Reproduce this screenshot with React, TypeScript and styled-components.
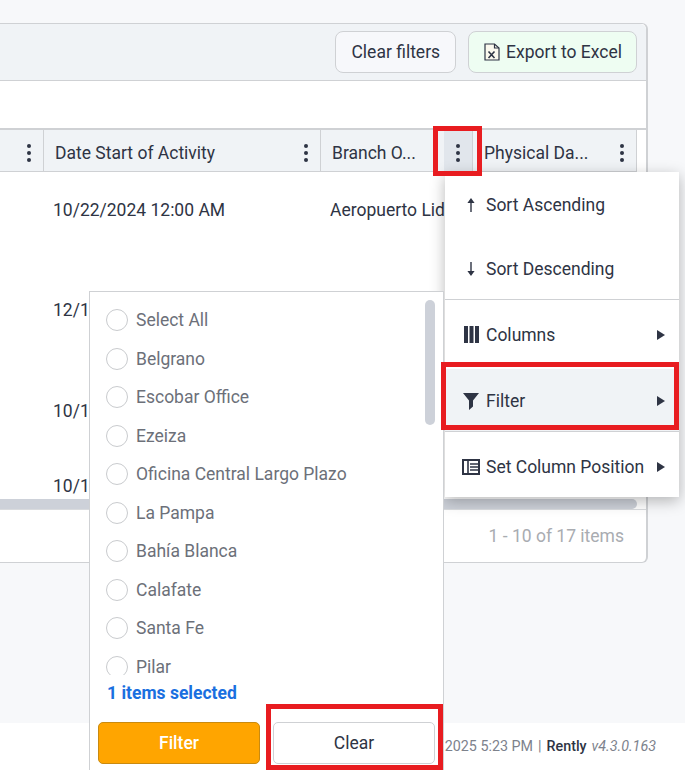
import React from "react";
import styled, { createGlobalStyle } from "styled-components";

const Global = createGlobalStyle`
  html, body { margin: 0; padding: 0; background: #f7f8fa; }
  * { box-sizing: border-box; }
  body { font-family: Roboto, "Liberation Sans", sans-serif; color: #2e3444; }
`;

const Page = styled.div`
  position: relative;
  width: 685px;
  height: 770px;
  overflow: hidden;
  display: flex;
  flex-direction: column;
`;
const Main = styled.main`
  flex: 1;
  padding: 23px 37px 0 0;
`;
const Card = styled.section`
  height: 540px;
  display: flex;
  flex-direction: column;
  background: #fff;
  border: 1px solid #cfd1d4;
  border-left: none;
  border-right-width: 2px;
  border-radius: 0 6px 6px 0;
`;
const Toolbar = styled.div`
  height: 57px;
  flex: none;
  display: flex;
  justify-content: flex-end;
  align-items: center;
  gap: 12px;
  padding-right: 9px;
  background: #f0f3f6;
  border-bottom: 1px solid #cfd1d4;
  border-radius: 0 6px 0 0;
`;
const ToolButton = styled.button<{ $green?: boolean }>`
  height: 42px;
  display: flex;
  align-items: center;
  gap: ${(p) => (p.$green ? "6px" : "0")};
  padding: 0 ${(p) => (p.$green ? "14px" : "15px")} 0 15px;
  font: 400 17.5px Roboto, sans-serif;
  color: #2e3444;
  background: ${(p) => (p.$green ? "#eefdf2" : "#f7f8fb")};
  border: 1px solid #cfd1d4;
  border-radius: 8px;
`;
const SearchStrip = styled.div`
  height: 49px;
  flex: none;
  border-bottom: 2px solid #cfd1d4;
`;
const cols = "44px 277px 152px 164px";
const HeaderRow = styled.div`
  height: 42px;
  flex: none;
  display: grid;
  grid-template-columns: ${cols};
  width: 637px;
  background: #f0f3f6;
  border-bottom: 1px solid #cfd1d4;
`;
const HeaderCell = styled.div`
  display: flex;
  align-items: center;
  justify-content: space-between;
  padding-left: 11px;
  font-size: 17.5px;
  border-right: 1px solid #cfd1d4;
  min-width: 0;
`;
const HeaderLabel = styled.span`
  flex: 1;
  padding-top: 4px;
  white-space: nowrap;
`;
const Kebab = styled.span<{ $active?: boolean }>`
  flex: none;
  width: 28px;
  height: 100%;
  padding-top: 4px;
  display: flex;
  flex-direction: column;
  align-items: center;
  justify-content: center;
  gap: 3px;
  background: ${(p) => (p.$active ? "#e1e6ec" : "transparent")};
  & > i {
    width: 4px;
    height: 4px;
    border-radius: 50%;
    background: #2e3444;
  }
`;
const Body = styled.div`
  height: 327px;
  flex: none;
  width: 637px;
  overflow: hidden;
`;
const Row = styled.div<{ $h: number }>`
  display: grid;
  grid-template-columns: ${cols};
  height: ${(p) => p.$h}px;
  padding-top: 28px;
  font-size: 17.5px;
  line-height: 20px;
`;
const Cell = styled.div`
  padding-left: 9px;
  white-space: nowrap;
  overflow: hidden;
`;
const ScrollTrack = styled.div`
  height: 11px;
  flex: none;
  border-bottom: 1px solid #d9dbde;
`;
const ScrollThumb = styled.div`
  width: 637px;
  height: 10px;
  background: #cdd1d9;
  border-radius: 0 5px 5px 0;
`;
const Pager = styled.div`
  flex: 1;
  display: flex;
  align-items: center;
  justify-content: flex-end;
  padding-right: 22px;
  font-size: 17.5px;
  color: #a9acb1;
`;
const Footer = styled.footer`
  height: 47px;
  flex: none;
  display: flex;
  align-items: center;
  justify-content: flex-end;
  gap: 5px;
  padding: 0 29px 2px 0;
  background: #fff;
  font-size: 14.3px;
  color: #7d828c;
`;
const Brand = styled.strong`
  font-weight: 500;
  color: #2e3444;
`;
const Version = styled.em`
  color: #7d828c;
`;

const Menu = styled.div`
  position: absolute;
  left: 445px;
  top: 172px;
  width: 234px;
  height: 325px;
  background: #fff;
  box-shadow: 0 4px 14px rgba(0, 0, 0, 0.28);
  display: flex;
  flex-direction: column;
`;
const MenuItem = styled.div<{ $h: number; $active?: boolean; $line?: boolean; $pt?: number }>`
  height: ${(p) => p.$h}px;
  flex: none;
  display: flex;
  align-items: center;
  padding: ${(p) => p.$pt ?? 0}px 14px 0 18px;
  font-size: 17.5px;
  background: ${(p) => (p.$active ? "#f0f3f6" : "#fff")};
  border-bottom: ${(p) => (p.$line ? "1px solid #cfd1d4" : "none")};
`;
const MenuIcon = styled.span`
  width: 16px;
  margin-right: 7px;
  flex: none;
  display: flex;
  align-items: center;
  justify-content: center;
  & > svg { flex: none; }
`;
const MenuLabel = styled.span`
  flex: 1;
  white-space: nowrap;
`;
const Caret = styled.span`
  flex: none;
  width: 0;
  height: 0;
  border-left: 8px solid #2e3444;
  border-top: 5px solid transparent;
  border-bottom: 5px solid transparent;
`;

const FilterPanel = styled.div`
  position: absolute;
  left: 89px;
  top: 291px;
  width: 355px;
  height: 479px;
  background: #fff;
  border: 1px solid #cfd1d4;
  border-bottom: none;
  display: flex;
  flex-direction: column;
`;
const ListArea = styled.div`
  position: relative;
  height: 383px;
  flex: none;
  overflow: hidden;
  padding: 9px 0 0 16px;
`;
const ListThumb = styled.div`
  position: absolute;
  left: 335px;
  top: 8px;
  width: 10px;
  height: 125px;
  border-radius: 5px;
  background: #cdd1d9;
`;
const Option = styled.div`
  height: 38.5px;
  display: flex;
  align-items: center;
  gap: 8px;
  font-size: 17.5px;
  color: #6c7079;
  white-space: nowrap;
`;
const Radio = styled.span`
  width: 22px;
  height: 22px;
  border-radius: 50%;
  border: 1px solid #c9cbce;
  background: #fff;
  flex: none;
`;
const Selected = styled.div`
  height: 47px;
  flex: none;
  padding: 7px 0 0 17px;
  font-size: 17.5px;
  font-weight: 700;
  line-height: 22px;
  color: #1a6fe0;
`;
const ButtonRow = styled.div`
  display: grid;
  grid-template-columns: 162px 162px;
  gap: 13px;
  margin-left: 8px;
`;
const FilterButton = styled.button`
  height: 42px;
  font: 500 17.5px Roboto, sans-serif;
  color: #fff;
  background: #ffa500;
  border: 1px solid #c98a10;
  border-radius: 5px;
`;
const ClearButton = styled.button`
  height: 42px;
  font: 400 17.5px Roboto, sans-serif;
  color: #2e3444;
  background: #fff;
  border: 1px solid #cfd1d4;
  border-radius: 5px;
`;
const Annotation = styled.div<{ $x: number; $y: number; $w: number; $h: number }>`
  position: absolute;
  left: ${(p) => p.$x}px;
  top: ${(p) => p.$y}px;
  width: ${(p) => p.$w}px;
  height: ${(p) => p.$h}px;
  border: 5px solid #e81c20;
  pointer-events: none;
`;

const Dots = ({ active }: { active?: boolean }) => (
  <Kebab $active={active}><i /><i /><i /></Kebab>
);
const ExcelIcon = () => (
  <svg width="16" height="18" viewBox="0 0 16 18" fill="none" stroke="#2e3444" strokeWidth="1.2">
    <path d="M1 1h9.5L15 5V17H1z" fill="#fbf9ee" />
    <path d="M10.5 1v4H15" />
    <path d="M4.5 8.5l6 6.5M10.5 8.5l-6 6.5" strokeWidth="1.6" />
  </svg>
);
const ArrowUp = () => (
  <svg width="10" height="14" viewBox="0 0 10 14" fill="#2e3444"><path d="M5 0l3.6 5H5.7v9H4.3V5H1.4z" /></svg>
);
const ArrowDown = () => (
  <svg width="10" height="14" viewBox="0 0 10 14" fill="#2e3444"><path d="M5 14l3.6-5H5.7V0H4.3v9H1.4z" /></svg>
);
const ColumnsIcon = () => (
  <svg width="15" height="17" viewBox="0 0 15 17" fill="#2e3444"><path d="M0 0h4v17H0zM5.5 0h4v17h-4zM11 0h4v17h-4z" /></svg>
);
const FunnelIcon = () => (
  <svg width="16" height="17" viewBox="0 0 16 17" fill="#2e3444"><path d="M0 0h16L10 7.5v6L6 17V7.5z" /></svg>
);
const PositionIcon = () => (
  <svg width="18" height="16" viewBox="0 0 18 16" fill="none" stroke="#2e3444" strokeWidth="2">
    <rect x="1" y="1" width="16" height="14" />
    <path d="M6 1v14M8 5h8M8 8h8M8 11h8" strokeWidth="1.6" />
  </svg>
);

const rows = [
  { h: 100, date: "10/22/2024 12:00 AM", branch: "Aeropuerto Lid" },
  { h: 101, date: "12/1", branch: "" },
  { h: 75, date: "10/1", branch: "" },
  { h: 51, date: "10/1", branch: "" },
];
const options = [
  "Select All", "Belgrano", "Escobar Office", "Ezeiza", "Oficina Central Largo Plazo",
  "La Pampa", "Bahía Blanca", "Calafate", "Santa Fe", "Pilar",
];

export default function App() {
  return (
    <Page>
      <Global />
      <Main>
        <Card>
          <Toolbar>
            <ToolButton>Clear filters</ToolButton>
            <ToolButton $green><ExcelIcon />Export to Excel</ToolButton>
          </Toolbar>
          <SearchStrip />
          <HeaderRow>
            <HeaderCell><HeaderLabel /><Dots /></HeaderCell>
            <HeaderCell><HeaderLabel>Date Start of Activity</HeaderLabel><Dots /></HeaderCell>
            <HeaderCell><HeaderLabel>Branch O...</HeaderLabel><Dots active /></HeaderCell>
            <HeaderCell><HeaderLabel>Physical Da...</HeaderLabel><Dots /></HeaderCell>
          </HeaderRow>
          <Body>
            {rows.map((r) => (
              <Row key={r.h} $h={r.h}>
                <Cell />
                <Cell>{r.date}</Cell>
                <Cell>{r.branch}</Cell>
                <Cell />
              </Row>
            ))}
          </Body>
          <ScrollTrack><ScrollThumb /></ScrollTrack>
          <Pager>1 - 10 of 17 items</Pager>
        </Card>
      </Main>
      <Footer>
        <span>2025 5:23 PM</span><span>|</span><Brand>Rently</Brand><Version>v4.3.0.163</Version>
      </Footer>

      <Menu>
        <MenuItem $h={66}><MenuIcon><ArrowUp /></MenuIcon><MenuLabel>Sort Ascending</MenuLabel></MenuItem>
        <MenuItem $h={62} $line><MenuIcon><ArrowDown /></MenuIcon><MenuLabel>Sort Descending</MenuLabel></MenuItem>
        <MenuItem $h={69}><MenuIcon><ColumnsIcon /></MenuIcon><MenuLabel>Columns</MenuLabel><Caret /></MenuItem>
        <MenuItem $h={63} $active $line $pt={2}><MenuIcon><FunnelIcon /></MenuIcon><MenuLabel>Filter</MenuLabel><Caret /></MenuItem>
        <MenuItem $h={65} $pt={4}><MenuIcon><PositionIcon /></MenuIcon><MenuLabel>Set Column Position</MenuLabel><Caret /></MenuItem>
      </Menu>

      <FilterPanel>
        <ListArea>
          {options.map((o) => (
            <Option key={o}><Radio />{o}</Option>
          ))}
          <ListThumb />
        </ListArea>
        <Selected>1 items selected</Selected>
        <ButtonRow>
          <FilterButton>Filter</FilterButton>
          <ClearButton>Clear</ClearButton>
        </ButtonRow>
      </FilterPanel>

      <Annotation $x={433} $y={126} $w={49} $h={50} />
      <Annotation $x={441} $y={362} $w={238} $h={68} />
      <Annotation $x={266} $y={704} $w={177} $h={66} />
    </Page>
  );
}
